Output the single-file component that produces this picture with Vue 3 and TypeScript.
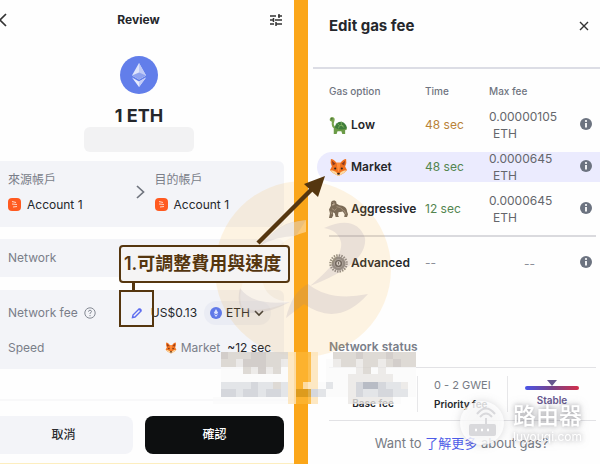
<script setup lang="ts">
import { h, type FunctionalComponent } from 'vue'

interface GasOption {
  key: string
  label: string
  time: string
  tone: string
  fee: string
  unit?: string
  active?: boolean
}

const gasOptions: GasOption[] = [
  { key: 'low', label: 'Low', time: '48 sec', tone: 'amber', fee: '0.00000105', unit: 'ETH' },
  { key: 'market', label: 'Market', time: '48 sec', tone: 'green', fee: '0.0000645', unit: 'ETH', active: true },
  { key: 'aggressive', label: 'Aggressive', time: '12 sec', tone: 'green', fee: '0.0000645', unit: 'ETH' },
  { key: 'advanced', label: 'Advanced', time: '--', tone: 'grey', fee: '--' },
]

const accounts = ['來源帳戶', '目的帳戶']

const FoxIcon: FunctionalComponent = () =>
  h('svg', { viewBox: '0 0 20 20', 'aria-hidden': 'true' }, [
    h('path', { d: 'M2 1 Q5 1 8 5 H12 Q15 1 18 1 Q19 5 17 9 L19 13 Q15 17 12 18 L10 19 L8 18 Q5 17 1 13 L3 9 Q1 5 2 1Z', fill: '#f0701d' }),
    h('path', { d: 'M3 3 L7 6 L4 8ZM17 3 L13 6 L16 8Z', fill: '#8c3b20' }),
    h('path', { d: 'M1 13 Q4 13 7 14.5 L10 17 L13 14.5 Q16 13 19 13 Q15 17 12 18 L10 19 L8 18 Q5 17 1 13Z', fill: '#fbd9a0' }),
    h('path', { d: 'M8 5 H12 L11 12 L10 15 L9 12Z', fill: '#ff9140' }),
    h('circle', { cx: 6.5, cy: 11, r: 1.1, fill: '#35231c' }),
    h('circle', { cx: 13.5, cy: 11, r: 1.1, fill: '#35231c' }),
    h('ellipse', { cx: 10, cy: 16.5, rx: 1.5, ry: 1, fill: '#35231c' }),
  ])

const mosaicColors: Record<string, string> = {
  a: 'rgba(203,197,194,.85)',
  b: 'rgba(216,211,206,.85)',
  c: 'rgba(232,230,228,.8)',
  d: 'rgba(208,211,216,.9)',
  e: 'rgba(224,226,229,.9)',
  f: 'rgba(180,184,194,.95)',
  o: 'rgba(214,152,30,.8)',
  p: 'rgba(252,180,50,.85)',
  y: 'rgba(253,228,185,.85)',
  w: 'rgba(250,250,250,.75)',
  '.': 'transparent',
}
const mosaicRows = [
  '.abbbaabbbyppy..bbbabbbabbb',
  '.bbcaaabbcyppy.wcbbcbbcbabb',
  '.wwwbcacbwyppy.wwwwcbwcwwww',
  '.wwwwwwwwwyppy.wwwccccccwww',
  '.eeeedeebeypyywewwcdffdeecw',
  '.ddeddeddeyoodewwwcdeeddeew',
  'wwwwwwwwwwyppy....ccccccw..',
]
const mosaic = mosaicRows.flatMap((row, y) =>
  [...row].map((c, x) => ({ x, y, fill: mosaicColors[c] })),
)
</script>

<template>
  <main class="board">
    <section class="review">
      <header class="review-head">
        <button class="bare back" aria-label="Back">
          <svg viewBox="0 0 12 14"><path d="M10 1 4 7l6 6" fill="none" stroke="#333" stroke-width="1.7" /></svg>
        </button>
        <h1>Review</h1>
        <button class="bare tune" aria-label="Settings">
          <svg viewBox="0 0 14 14" fill="none" stroke="#333" stroke-width="1.5">
            <path d="M1 3h6M9 3h4M10 1v4M1 7h3M6 7h7M4.500 5v4M1 11h4M7 11h6M7 9v4" />
          </svg>
        </button>
      </header>

      <div class="amount">
        <svg class="eth-logo" viewBox="0 0 38 38">
          <circle cx="19" cy="19" r="19" fill="#627eea" />
          <path d="M19 7 12 19.500 19 23.500 26 19.500Z" fill="#dfe5fb" />
          <path d="M19 7v16.500l7-4Z" fill="#bfcaf7" />
          <path d="m12 19.500 7-3 7 3-7 4Z" fill="#8fa3f0" />
          <path d="m12 21.500 7 4 7-4-7 9.500Z" fill="#e8ecfd" />
          <path d="m19 25.500 7-4-7 9.500Z" fill="#c3cdf8" />
        </svg>
        <strong>1 ETH</strong>
        <span class="masked"></span>
      </div>

      <div class="card accounts">
        <template v-for="(name, i) in accounts" :key="name">
          <svg v-if="i" class="chevron" viewBox="0 0 9 14"><path d="m1 1 6.500 6L1 13" fill="none" stroke="#6f747e" stroke-width="1.700" /></svg>
          <div class="account">
            <span class="caption">{{ name }}</span>
            <span class="account-name">
              <svg viewBox="0 0 13 13">
                <rect width="13" height="13" rx="4" fill="#ff5a20" />
                <path d="M4 3.500 8 4.500M4 6l5 .5M5 9l4-.5" stroke="#ffd4c2" stroke-width="1.200" fill="none" />
              </svg>
              Account 1
            </span>
          </div>
        </template>
      </div>

      <div class="card network"><span>Network</span></div>

      <div class="card fees">
        <div class="line">
          <span class="line-label">Network fee
            <svg class="help" viewBox="0 0 12 12" fill="none" stroke="#858a94">
              <circle cx="6" cy="6" r="5.200" /><path d="M4.500 4.700Q4.600 3.200 6 3.200T7.500 4.600Q7.400 5.500 6 6.200V7M6 8v1.200" />
            </svg>
          </span>
          <span class="fee-value">
            <button class="bare edit" aria-label="Edit network fee">
              <svg viewBox="0 0 12 12"><path d="m1.500 10.500.5-2.500 6-6 2 2-6 6Z" fill="none" stroke="#5d6df0" stroke-width="1.400" /><path d="m8 2 1-1 2 2-1 1Z" fill="#5d6df0" /></svg>
            </button>
            <span class="usd">US$0.13</span>
            <button class="bare token">
              <svg class="coin" viewBox="0 0 12 12"><circle cx="6" cy="6" r="6" fill="#6079e8" /><path d="M6 2 3.800 6 6 7.300 8.200 6ZM3.800 7 6 10l2.200-3L6 8.200Z" fill="#dce3ff" /></svg>
              ETH
              <svg class="down" viewBox="0 0 10 7"><path d="m1 1 4 4 4-4" fill="none" stroke="#333" stroke-width="1.600" /></svg>
            </button>
          </span>
        </div>
        <div class="line">
          <span class="line-label">Speed</span>
          <span class="speed"><FoxIcon class="fox-small" /><span class="muted">Market</span><span>~12 sec</span></span>
        </div>
      </div>

      <footer class="actions">
        <button class="action">取消</button>
        <button class="action primary">確認</button>
      </footer>
    </section>

    <div class="divider"></div>

    <section class="gas">
      <header class="gas-head">
        <h2>Edit gas fee</h2>
        <button class="bare close" aria-label="Close">
          <svg viewBox="0 0 10 10"><path d="m1 1 8 8M9 1 1 9" stroke="#333" stroke-width="1.400" /></svg>
        </button>
      </header>

      <table>
        <thead>
          <tr><th class="col-option">Gas option</th><th class="col-time">Time</th><th class="col-fee">Max fee</th><td class="col-info"></td></tr>
        </thead>
        <tbody>
          <tr v-for="o in gasOptions" :key="o.key" :class="[o.key, { active: o.active }]">
            <th scope="row">
              <span class="option">
                <svg v-if="o.key === 'low'" viewBox="0 0 20 20">
                  <path d="M6 13Q2 12 3 6L1 5Q0 2 3 1q3 0 3 3L5 8q0 3 3 4Z" fill="#78a54d" />
                  <path d="M5 12h13l1 2-2 1v4h-3l-1-3H9l-1 3H5Z" fill="#6b9b47" />
                  <path d="M6 12q1-6 7-6 5 1 6 7-7 3-13-1Z" fill="#3f7d3b" />
                  <path d="m9 8 2 2-1 3M13 6v4l3 2M11 10h4" stroke="#78ac5c" fill="none" />
                  <circle cx="3" cy="3" r=".7" fill="#233" />
                </svg>
                <FoxIcon v-else-if="o.key === 'market'" />
                <svg v-else-if="o.key === 'aggressive'" viewBox="0 0 20 20">
                  <path d="M2 4q0-4 4-3.500 2 .5 2 3.500 3 2 6 2 5 2 5 6l1 3-1 3h-3l.5-3-2-3-4.500 1-.5 3 1 2H7l-1-4-2-1 .5 3-1.500 3H0l1-5-1-4 2-4Z" fill="#6a625e" />
                  <path d="m3 3 2.500-.5L6 5 3.500 6Z" fill="#b3a8a2" />
                  <path d="m8 7 4 1 4 4M3 9l3 2 2-2M16 11l2 4M2 12l1 3" stroke="#9a8f89" fill="none" />
                  <circle cx="4" cy="3.500" r=".6" fill="#222" />
                </svg>
                <svg v-else viewBox="0 0 20 20">
                  <circle cx="10" cy="10" r="8.500" fill="none" stroke="#8a8a8a" stroke-width="2.500" stroke-dasharray="1.500 1.170" />
                  <circle cx="10" cy="10" r="6" fill="#a9a9a9" stroke="#8a8a8a" stroke-width="2.500" />
                  <circle cx="10" cy="10" r="3" fill="#ddd" stroke="#555" stroke-width="1.500" />
                  <path d="M10 8.500v2.500" stroke="#555" />
                </svg>
                {{ o.label }}
              </span>
            </th>
            <td :class="o.tone">{{ o.time }}</td>
            <td class="fee"><span>{{ o.fee }}</span><span v-if="o.unit" class="unit">{{ o.unit }}</span></td>
            <td>
              <svg class="info" viewBox="0 0 12 12"><circle cx="6" cy="6" r="6" fill="#6c7380" /><path d="M6 5v4.500" stroke="#fff" stroke-width="1.800" /><circle cx="6" cy="3" r="1.100" fill="#fff" /></svg>
            </td>
          </tr>
        </tbody>
      </table>

      <h3>Network status</h3>
      <div class="status">
        <div class="stat base"><span></span><b>Base fee</b></div>
        <div class="stat priority"><span>0 - 2 GWEI</span><b>Priority fee</b></div>
        <div class="stat stable">
          <svg viewBox="0 0 54 11">
            <defs><linearGradient id="heat"><stop stop-color="#4a55e8" /><stop offset=".5" stop-color="#774289" /><stop offset="1" stop-color="#d32f4a" /></linearGradient></defs>
            <rect y="6" width="54" height="4" rx="2" fill="url(#heat)" />
            <path d="M22 0h10l-5 6Z" fill="#66578f" />
          </svg>
          <b>Stable</b>
        </div>
      </div>
      <p class="more">Want to <a href="#">了解更多</a> about gas?</p>
    </section>

    <svg class="emblem" viewBox="0 0 178 178" aria-hidden="true">
      <circle cx="89" cy="89" r="88" fill="#f9a825" opacity=".13" />
      <path d="M92 40Q50 44 36 90 22 108 28 128 44 134 76 122 50 120 48 98 54 62 92 52Z" fill="#fff" opacity=".4" />
      <path d="M92 40Q66 40 46 66 62 56 82 56ZM26 108Q22 124 30 132 50 136 76 122 38 126 26 108Z" fill="#8c83a0" opacity=".15" />
      <path d="M110 48Q142 34 151 58 154 84 96 106 130 78 127 62 124 50 110 48ZM94 104Q116 122 154 114 124 148 90 124L72 138Q78 112 94 104Z" fill="#8c83a0" opacity=".17" />
    </svg>

    <svg class="mosaic" viewBox="0 0 27 7" preserveAspectRatio="none" aria-hidden="true" shape-rendering="crispEdges">
      <rect v-for="(m, i) in mosaic" :key="i" :x="m.x" :y="m.y" width="1" height="1" :fill="m.fill" />
    </svg>

    <div class="router">
      <svg viewBox="0 0 44 44">
        <circle cx="22" cy="22" r="22" fill="#fff" opacity=".8" />
        <rect x="9" y="23" width="27" height="12" rx="2" fill="#d9d9dc" />
        <path d="M20 16q6-7 12 0M17 13q9-11 18 0M26 17v7" fill="none" stroke="#d9d9dc" stroke-width="2" />
        <path d="M15 29h2m4 0h2m4 0h2" stroke="#fff" stroke-width="2.500" />
      </svg>
      <span class="router-text"><b>路由器</b><span>luyouqi.com</span></span>
    </div>

    <svg class="pointer" viewBox="0 0 80 84" aria-hidden="true">
      <path d="M4 78 60 22" stroke="#55360f" stroke-width="4.500" />
      <path d="m71 11-21 8 14 13Z" fill="#55360f" />
    </svg>
    <div class="note">1.可調整費用與速度</div>
    <div class="target"></div>
  </main>
</template>

<style>
body { margin: 0; background: #fff; }
</style>

<style scoped>
* { box-sizing: border-box; }
.board {
  position: relative;
  display: grid;
  grid-template-columns: 294fr 14px 292fr;
  min-height: 100vh;
  overflow: hidden;
  background: #fefefe;
  color: #25272b;
  font: 13px/20px Inter, "Noto Sans CJK TC", sans-serif;
}
h1, h2, h3, p { margin: 0; }
svg { display: block; flex: none; overflow: visible; }
.bare { padding: 0; border: 0; background: none; color: inherit; font: inherit; }
.divider { background: #fba619; }

.review { display: flex; flex-direction: column; border-bottom: 1px solid #fdeebf; }
.review-head { display: flex; align-items: center; justify-content: space-between; padding: 10px 11px 0 0; height: 30px; }
.review-head h1 { font-size: 12px; line-height: 20px; }
.back { margin-left: -4px; }
.back svg { width: 12px; height: 14px; }
.tune svg { width: 14px; height: 14px; }
.amount { display: flex; flex-direction: column; align-items: center; padding: 26px 16px 0 0; }
.eth-logo { width: 38px; height: 38px; }
.amount strong { margin-top: 11px; font-size: 18px; line-height: 22px; }
.masked { width: 110px; height: 25px; border-radius: 6px; background: #f2f2f3; }
.card { margin-right: 10px; border-radius: 0 6px 6px 0; background: #f3f4f8; }
.accounts { display: flex; align-items: center; margin-top: 9px; padding: 8px 2px 12px 8px; height: 66px; }
.account { flex: 1; display: flex; flex-direction: column; gap: 5px; }
.caption { font-size: 12px; color: #7a7e89; }
.account-name { display: flex; align-items: center; gap: 6px; font-size: 12px; }
.account-name svg { width: 13px; height: 13px; }
.chevron { width: 9px; height: 14px; margin-right: 10px; }
.network { display: flex; align-items: center; margin-top: 12px; padding: 0 8px; height: 38px; color: #7a7e89; font-size: 12px; }
.fees { margin-top: 13px; padding: 11px 13px 11px 8px; height: 79px; display: flex; flex-direction: column; justify-content: space-between; }
.line { display: flex; align-items: center; justify-content: space-between; }
.line-label { display: flex; align-items: center; gap: 6px; color: #7a7e89; font-size: 12px; }
.help { width: 12px; height: 12px; }
.fee-value { display: flex; align-items: center; font-size: 12px; }
.edit svg { width: 12px; height: 12px; }
.usd { margin-left: 8px; }
.token { display: flex; align-items: center; gap: 4px; height: 24px; margin-left: 7px; padding: 0 7px 0 6px; border-radius: 12px; background: #eaecf4; }
.coin { width: 12px; height: 12px; }
.down { width: 10px; height: 7px; }
.speed { display: flex; align-items: center; gap: 4px; font-size: 12px; }
.speed .muted { color: #7a7e89; margin-right: 3px; }
.fox-small { width: 12px; height: 12px; }
.actions { display: grid; grid-template-columns: 133fr 139fr; gap: 12px; margin-top: 30px; padding: 15px 10px 9px 0; border-top: 2px solid #f8f8f9; }
.action { height: 38px; border: 0; border-radius: 0 8px 8px 0; background: #f3f4f8; color: #2a2b2e; font: 500 12px/20px Inter, "Noto Sans CJK TC", sans-serif; padding: 0 6px 0 0; }
.action.primary { border-radius: 8px; background: #0d0f10; color: #fff; padding: 0; }

.gas { display: flex; flex-direction: column; padding-left: 5px; }
.gas-head { display: flex; align-items: center; justify-content: space-between; height: 69px; padding: 0 11px 15px 16px; border-bottom: 2px solid #dcdde5; }
.gas-head h2 { font-size: 15px; line-height: 20px; }
.close svg { width: 10px; height: 10px; }
table { width: 100%; border-collapse: separate; border-spacing: 0; table-layout: fixed; }
th, td { padding: 0; text-align: left; font-weight: 400; }
thead th { height: 35px; padding-top: 9px; font-size: 10px; line-height: 12px; font-weight: 500; color: #6f7480; }
.col-option { width: 112px; }
.col-time { width: 64px; }
.col-info { width: 20px; }
th:first-child { padding-left: 16px; }
tbody tr { height: 42px; font-size: 12px; }
tbody th { font-weight: 600; }
.option { display: flex; align-items: center; gap: 3px; }
.option svg { width: 19px; height: 19px; }
.fee { color: #65666b; line-height: 17px; }
.fee span { display: block; }
.fee .unit { padding-left: 4px; }
.info { width: 12px; height: 12px; margin-bottom: 3px; }
.active > * { background: linear-gradient(#ebebfe, #ebebfe) center / 100% 30px no-repeat; }
.active th { position: relative; isolation: isolate; background: none; }
.active th::before { content: ""; position: absolute; z-index: -1; inset: 6px 0 6px 4px; border-radius: 15px 0 0 15px; background: #ebebfe; }
.amber { color: #b98238; }
.green { color: #53854f; }
.grey, .advanced .fee { color: #8b8f98; }
.advanced { height: 66px; background: linear-gradient(#dadade, #dadade) 16px 5px / calc(100% - 20px) 2px no-repeat; }
.advanced .fee { text-align: center; padding-right: 10px; }
.gas h3 { margin: 41px 16px 0; font-size: 12px; line-height: 20px; font-weight: 600; color: #7a7e89; }
.status { display: grid; grid-template-columns: 88fr 90fr 89fr; margin: 10px 4px 0 16px; padding: 8px 0; border-top: 1px solid #e2e2e5; border-bottom: 1px solid #e2e2e5; }
.stat { display: flex; flex-direction: column; gap: 1px; height: 36px; border-left: 1px solid #e7e7e9; }
.stat span { height: 18px; font-size: 11px; line-height: 18px; color: #777b84; }
.stat b { font-size: 10px; line-height: 18px; font-weight: 600; }
.base { align-items: center; border: 0; }
.priority { padding-left: 16px; }
.stable { align-items: center; padding-top: 4px; color: #66578f; }
.stable b { line-height: 16px; }
.stable svg { width: 54px; height: 11px; }
.more { margin-top: 12px; text-align: center; padding-left: 10px; color: #777b84; font-size: 13px; }
.more a { color: #4d5ce8; text-decoration: none; }

.emblem { position: absolute; left: 214px; top: 180px; width: 178px; height: 178px; }
.mosaic { position: absolute; left: 213px; top: 352px; width: 203px; height: 52px; }
.router { position: absolute; left: 460px; top: 401px; display: flex; align-items: center; gap: 9px; color: #fff; filter: drop-shadow(0 0 4px rgb(80 80 90 / 26%)); }
.router svg { width: 44px; height: 44px; }
.router-text { display: flex; flex-direction: column; text-shadow: 0 0 4px rgb(80 80 90 / 40%); }
.router-text b { font-size: 23px; line-height: 28px; font-weight: 500; }
.router-text span { font-size: 12px; line-height: 14px; }
.note { position: absolute; left: 119px; top: 245px; height: 38px; padding: 0 7px 0 3px; border: 2px solid #55360f; border-radius: 4px; background: #f5f4f4; color: #55360f; font: 600 18px/34px Inter, "Noto Sans CJK TC", sans-serif; white-space: nowrap; }
.target { position: absolute; left: 119px; top: 290px; width: 35px; height: 37px; border: 2px solid #55360f; }
.target::before { content: ""; position: absolute; left: 11px; top: -9px; width: 3px; height: 9px; background: #55360f; }
.pointer { position: absolute; left: 254px; top: 165px; width: 80px; height: 84px; }
</style>
